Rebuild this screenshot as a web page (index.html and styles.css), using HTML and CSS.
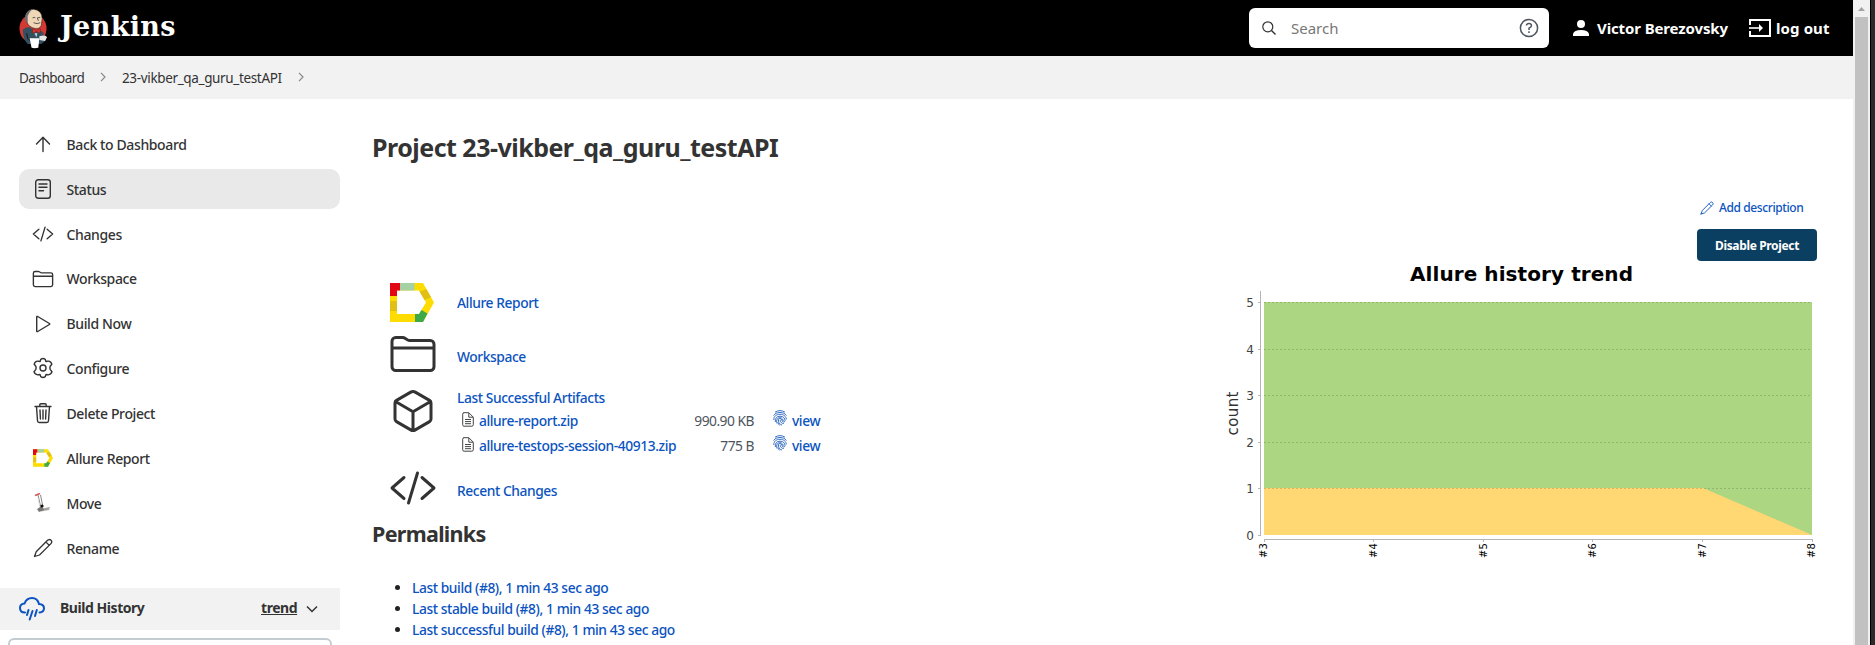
FILE: index.html
```html
<!DOCTYPE html>
<html lang="en">
<head>
<meta charset="utf-8">
<title>Project 23-vikber_qa_guru_testAPI</title>
<link rel="stylesheet" href="styles.css">
</head>
<body>
<svg class="defs" width="0" height="0">
  <symbol id="i-code" viewBox="0 0 512 512"><path d="M160 368 32 256l128-112M352 368l128-112-128-112M304 96l-96 320" class="st"/></symbol>
  <symbol id="i-folder" viewBox="0 0 512 512"><path d="M440 432H72a40 40 0 0 1-40-40V120a40 40 0 0 1 40-40h75.900a40 40 0 0 1 22.200 6.700l27.800 18.600a40 40 0 0 0 22.200 6.700H440a40 40 0 0 1 40 40v240a40 40 0 0 1-40 40zM32 192h448" class="st"/></symbol>
  <symbol id="i-pen" viewBox="0 0 20 20"><path d="M1.500 18.500 3.200 13.700 14.300 2.500C15.500 1.300 17 1.200 18 2.200s.9 2.500-.3 3.700L6.500 17 1.500 18.500zM13 4.100l3.200 3.200" class="st"/></symbol>
  <symbol id="i-allure" viewBox="0 0 44 39"><path fill-rule="evenodd" d="M0 0h33l11 19.500L33 39H0zM7 7.500V31h22l7-11.500-7-12z" fill="#ffdc00"/><path d="M0 0h10v7.500H7V13H0z" fill="#e30613"/><path d="M10 0h14.500v7.500H10z" fill="#a5d2a5"/><path d="M36.500 6.200 41 14.200 34.500 17l-5-8.600z" fill="#e0c014"/><path d="m31.500 27 6 3.500L33 39h-8v-8h4z" fill="#3daa47"/><path d="M0 18h7v10H0z" fill="#e0c014"/></symbol>
  <symbol id="i-file" viewBox="0 0 12 15"><path d="M1.800.7h5l4.500 4.500v7.500q0 1.500-1.500 1.500h-8Q.7 14.200.7 12.700v-10.500Q.7.700 2 .7zM6.800.9v4.300h4.300M3 7.500h6M3 9.600h6M3 11.700h6" fill="none" stroke="#444"/></symbol>
  <symbol id="i-finger" viewBox="0 0 14 16"><g fill="none" stroke="#2b66c0" stroke-width=".95"><path d="M2 2.200Q7-1 12 2.200M.5 5.500Q2.500 2.400 7 2.400t6.500 3.100M.8 10C.8 6 3.500 4.300 7 4.300s6.300 2 6.300 5.200M2.300 12C2 8.500 3.500 6.200 7 6.200s5 2.200 5 4.300q0 1.500-1.400 1.500c-2 0-1.600-3.500-3.600-3.500-1.500 0-1.700 1-1.500 2.500.2 2 1.500 3.500 3.500 4M4 13.500C3 9.500 4.500 7.700 7 7.700s3 2 3.300 3.300M7.200 10.200c.2 2 1.500 3.300 3.600 3.300M6.800 15.500Q5.300 14 4.800 12.500"/></g></symbol>
</svg>
<div class="window">
<div class="page">
  <header class="top">
    <svg class="butler" viewBox="0 0 30 42">
      <ellipse cx="14.500" cy="21" rx="14" ry="15" fill="#d33833"/>
      <path d="M4 22q4-3 8-2l4 5 5-3 4 3 2 9-4 3H9Q4 32 4 22z" fill="#335061"/>
      <path d="M8 26q0 6 4 8" stroke="#111" fill="none"/>
      <path d="M7 9Q8 1 15 1q9 1 9 10l-1 7q-2 4-6 3-7-1-9-7z" fill="#f0d6b7" stroke="#222" stroke-width=".6"/>
      <path d="M6 10Q7 2 14 1q-4 3-5 7v7Q6 14 6 10z" fill="#6d6b6d"/>
      <path d="M14 10q2-1 3 0M19 10l3-.5M15 15q4 2 7 0M19 10l1 3" stroke="#444" fill="none" stroke-width=".9"/>
      <path d="m14 21 4 2 4-2v5l-4-2-4 2z" fill="#d33833" stroke="#81201e" stroke-width=".6"/>
      <path d="m16 26 3 0-1 4z" fill="#cfd8dc"/>
      <path d="M11 31h10l-1 10q-4 1-7 0z" fill="#fff"/><path d="M21 29q7-2 8 1l-2 4-6-1z" fill="#e4e4e4"/>
    </svg>
    <span class="brand">Jenkins</span>
    <div class="search">
      <svg width="14" height="14" viewBox="0 0 14 14"><circle cx="5.800" cy="5.800" r="5" fill="none" stroke="#333" stroke-width="1.200"/><path d="m9.500 9.500 4 4" stroke="#333" stroke-width="1.400"/></svg>
      <span class="ph">Search</span>
      <svg width="20" height="20" viewBox="0 0 20 20" fill="none" stroke="#4d545d" stroke-width="1.500"><circle cx="10" cy="10" r="8.600"/><path d="M7.400 7.500Q7.700 5.500 10 5.500t2.500 2Q12.500 9 10 10.200V12"/><path d="M10 13.200v1.700"/></svg>
    </div>
    <svg class="user" width="16" height="16" viewBox="0 0 16 16" fill="#fff"><circle cx="8" cy="4" r="4"/><path d="M0 16v-2q1-4 8-4t8 4v2z"/></svg>
    <span class="name">Victor Berezovsky</span>
    <svg class="exit" width="22" height="18" viewBox="0 0 22 18" fill="none" stroke="#fff" stroke-width="2"><path d="M1 6V1h20v16H1v-5"/><path d="M0 9h12" stroke-width="1.600"/><path d="m10 5 4 4-4 4z" fill="#fff" stroke="none"/></svg>
    <span class="logout">log out</span>
  </header>
  <nav class="crumbs">
    <span class="c1">Dashboard</span>
    <svg class="chev" viewBox="0 0 6 10"><path d="m1 .8 4 4.200-4 4.200"/></svg>
    <span class="c2">23-vikber_qa_guru_testAPI</span>
    <svg class="chev" viewBox="0 0 6 10"><path d="m1 .8 4 4.200-4 4.200"/></svg>
  </nav>
  <div class="cols">
    <aside class="side">
      <ul class="tasks">
        <li><svg viewBox="0 0 22 22"><path d="M11 18.500v-14M4.500 11 11 4.200l6.500 6.800" class="s"/></svg><span>Back to Dashboard</span></li>
        <li class="on"><svg viewBox="0 0 22 22"><rect x="3.700" y="1.700" width="14.600" height="18.600" rx="2.500" class="s"/><path d="M7 6h8M7 9.300h8M7 12.800h4.500" class="s"/></svg><span>Status</span></li>
        <li><svg><use href="#i-code"/></svg><span>Changes</span></li>
        <li><svg><use href="#i-folder"/></svg><span>Workspace</span></li>
        <li><svg viewBox="0 0 22 22"><path d="M4.700 4v14q0 1 1 .5l11.700-7q.8-.5 0-1L5.700 3.500q-1-.5-1 .5z" class="s"/></svg><span>Build Now</span></li>
        <li><svg viewBox="0 0 22 22"><circle cx="11" cy="11" r="3" class="s"/><path d="M8.800 2.300Q11 .8 13.200 2.300L13.900 4.500 16.200 4.100Q19 4 19.800 7.200L18.200 9.200Q17.600 11 18.300 12.600L20 14.700Q19.300 17.500 16.300 17.900L14 17.500 13.200 19.700Q11 21.200 8.800 19.700L8 17.500 5.700 17.900Q2.700 17.500 2 14.700L3.700 12.600Q4.400 11 3.800 9.200L2.200 7.200Q3 4 5.800 4.100L8.100 4.500z" class="s"/></svg><span>Configure</span></li>
        <li><svg viewBox="0 0 22 22"><path d="M3 4.500h16M4.500 4.500l1 14.300q.1 1.700 1.700 1.700h7.600q1.600 0 1.700-1.700l1-14.300M7.800 4.500V2.700q0-1 1-1h4.400q1 0 1 1v1.800M11 8v9M8 8l.4 9M14 8l-.4 9" class="s"/></svg><span>Delete Project</span></li>
        <li><svg viewBox="0 0 22 22"><use href="#i-allure" x="1" y="2" width="20" height="18"/></svg><span>Allure Report</span></li>
        <li><svg viewBox="0 0 22 22"><path d="M6 3 9 16M8.500 3 11 15" stroke="#888" fill="none"/><path d="M3 3.500 8 1.500" stroke="#d65a5a" stroke-width="1.800"/><path d="m6 6 2 10" stroke="#ddd"/><path d="m10 16.500 8-1.500-1 3-8 1.500z" fill="#aaa69f"/><path d="m5 17 5-3 2 4-5 2z" fill="#777"/><circle cx="10" cy="14" r="1.500" fill="#111"/></svg><span>Move</span></li>
        <li><svg viewBox="0 0 22 22"><use href="#i-pen" x="1" y="1" width="20" height="20"/></svg><span>Rename</span></li>
      </ul>
      <div class="hist">
        <svg width="26" height="24" viewBox="0 0 26 24" fill="none" stroke="#0b53c0" stroke-width="2" stroke-linecap="round"><path d="M6 15.500Q1 15.500 1 11q0-4 4.500-4.500Q7.500 1 13 1t7 6q5 .3 5 4.300t-4.500 4.200"/><path d="M9.500 13 8 18M13.500 14l-2.800 8.500M17.800 13 16 19"/></svg>
        <b class="bh">Build History</b><b class="trend">trend</b>
        <svg width="12" height="8" viewBox="0 0 12 8"><path d="m1 1.500 5 5 5-5" fill="none" stroke="#333" stroke-width="1.500"/></svg>
      </div>
      <div class="filter"></div>
    </aside>
    <main>
      <h1>Project 23-vikber_qa_guru_testAPI</h1>
      <div class="body">
        <section class="left">
          <div class="row r1"><svg class="logo" width="44" height="39"><use href="#i-allure"/></svg><a>Allure Report</a></div>
          <div class="row r2"><svg class="big"><use href="#i-folder"/></svg><a>Workspace</a></div>
          <div class="row r3"><svg class="big" viewBox="0 0 512 512"><path d="M448 341.400V170.600A32 32 0 0 0 432.100 143l-152-88.500a48 48 0 0 0-48.200 0L79.900 143A32 32 0 0 0 64 170.600v170.800A32 32 0 0 0 79.900 369l152 88.500a48 48 0 0 0 48.200 0l152-88.500A32 32 0 0 0 448 341.400zM69 154l187 110 187-110M256 463V264" class="st"/></svg>
            <div class="art"><a class="l3">Last Successful Artifacts</a>
              <div class="f"><svg class="doc"><use href="#i-file"/></svg><a class="file">allure-report.zip</a><span class="size">990.90 KB</span><svg class="fp"><use href="#i-finger"/></svg><a>view</a></div>
              <div class="f"><svg class="doc"><use href="#i-file"/></svg><a class="file">allure-testops-session-40913.zip</a><span class="size">775 B</span><svg class="fp"><use href="#i-finger"/></svg><a>view</a></div>
            </div></div>
          <div class="row r4"><svg class="big"><use href="#i-code"/></svg><a>Recent Changes</a></div>
          <h2>Permalinks</h2>
          <ul class="perma"><li><a>Last build (#8), 1 min 43 sec ago</a></li><li><a>Last stable build (#8), 1 min 43 sec ago</a></li><li><a>Last successful build (#8), 1 min 43 sec ago</a></li></ul>
        </section>
        <section class="right">
          <div class="desc"><svg width="14" height="14" class="blue"><use href="#i-pen"/></svg><a class="add">Add description</a></div>
          <div class="btn">Disable Project</div>
          <svg class="chart" width="600" height="310" viewBox="1220 260 600 310">
            <text x="1410" y="280.500" class="title" textLength="223">Allure history trend</text>
            <path d="M1264 302h548v233h-548z" fill="#add683"/>
            <path d="M1264 488h439l109 47h-548z" fill="#ffd773"/>
            <path d="M1264 302.500h548M1264 349.500h548M1264 395.500h548M1264 442.500h548M1264 488.500h548" class="grid"/>
            <path d="M1260.500 291v244.500M1258 302.500h3M1258 349.500h3M1258 395.500h3M1258 442.500h3M1258 488.500h3M1258 535.500h3M1264 539.500h548.500M1264.500 539v3M1373.500 539v3M1483.500 539v3M1592.500 539v3M1702.500 539v3M1812.500 539v3" class="axis"/>
            <g class="num"><text x="1254" y="307">5</text><text x="1254" y="353.500">4</text><text x="1254" y="400">3</text><text x="1254" y="446.500">2</text><text x="1254" y="493">1</text><text x="1254" y="539.500">0</text></g>
            <text transform="translate(1238 435.500) rotate(-90)" class="cnt" textLength="44">count</text>
            <g class="tick"><text transform="translate(1267 558) rotate(-90)">#3</text><text transform="translate(1377 558) rotate(-90)">#4</text><text transform="translate(1487 558) rotate(-90)">#5</text><text transform="translate(1596 558) rotate(-90)">#6</text><text transform="translate(1706 558) rotate(-90)">#7</text><text transform="translate(1815 558) rotate(-90)">#8</text></g>
          </svg>
        </section>
      </div>
    </main>
  </div>
</div>
<div class="scroll"><svg width="17" height="17" viewBox="0 0 17 17"><path d="M5 11h7L8.500 7z" fill="#a3a3a3"/></svg><div class="thumb"></div></div>
<div class="edge"></div>
</div>
</body>
</html>
```

FILE: styles.css
```css
* { box-sizing: border-box; }
body { margin: 0; font: 500 14px/20px "Noto Sans", "Open Sans", sans-serif; color: #333; background: #fff; }
ul { list-style: none; margin: 0; padding: 0; }
.defs { position: absolute; }
.window { display: flex; height: 645px; overflow: hidden; }
.page { width: 1853px; height: 645px; overflow: hidden; }
.page svg { flex: none; }
span, a, b { white-space: nowrap; }
a { color: #0b53c0; }
.top { display: flex; align-items: center; height: 56px; background: #000; color: #fff; padding-left: 19px; }
.butler { width: 29px; height: 41px; }
.brand { font: bold 27px/32px "DejaVu Serif", serif; letter-spacing: .35px; margin-left: 12px; flex: 0 0 1189px; padding-bottom: 3px; }
.search { display: flex; align-items: center; flex: 0 0 300px; height: 40px; background: #fff; border-radius: 6px; padding: 0 10px 0 13px; }
.ph { color: #777; font-size: 15px; font-weight: 400; margin-left: 15px; flex: 1; }
.user { margin-left: 24px; }
.name, .logout { font-weight: 700; font-size: 15px; letter-spacing: -.12px; }
.name { margin-left: 8px; width: 152px; }
.logout { margin-left: 5px; letter-spacing: .1px; }
.crumbs { display: flex; align-items: center; height: 43px; background: #f2f2f2; padding-left: 19px; font-weight: 400; font-size: 13.5px; letter-spacing: -.35px; }
.c1 { width: 81px; letter-spacing: -.5px; }
.c2 { width: 176px; margin-left: 16px; }
.chev { width: 6px; height: 10px; fill: none; stroke: #888; stroke-width: 1.2; margin-bottom: 2px; }
.cols { display: flex; }
.side { width: 340px; padding-top: 25px; }
.tasks { padding-left: 19px; letter-spacing: -.38px; }
.tasks li { display: flex; align-items: center; height: 40px; margin-bottom: 4.9px; padding-left: 13px; border-radius: 10px; }
.tasks li.on { background: #e9e9e9; }
.tasks svg { width: 22px; height: 22px; }
.tasks span { margin-left: 12.500px; padding-top: 1.500px; }
.s { fill: none; stroke: #333; stroke-width: 1.4; stroke-linecap: round; stroke-linejoin: round; }
.st { fill: none; stroke: #333; stroke-width: 32; stroke-linecap: round; stroke-linejoin: round; }
#i-pen .st { stroke: currentColor; stroke-width: 1.3; }
.blue { color: #0b53c0; }
.hist { display: flex; align-items: center; height: 42px; background: #f2f2f2; margin-top: 19.9px; padding-left: 19px; letter-spacing: -.45px; }
.bh, .trend { padding-bottom: 1px; }
.bh { margin-left: 15px; width: 201px; }
.trend { text-decoration: underline; margin-right: 10px; width: 35px; }
.filter { height: 40px; margin: 8px 8px 0; border: 2px solid #c3cdd1; border-radius: 6px; }
main { width: 1513px; padding-left: 32px; }
h1 { font-size: 25px; line-height: 34px; letter-spacing: -.51px; margin: 31px 0 1px; }
h2 { font-size: 21.5px; line-height: 30px; letter-spacing: -.7px; margin: 0; }
.body { display: flex; }
.left { width: 700px; padding-top: 118px; font-size: 13.8px; letter-spacing: -.42px; }
.row { display: flex; padding-left: 18px; }
.row > a, .art { margin-left: 21px; }
.big { width: 48px; height: 48px; margin: 0 -1px; }
.logo { margin-right: 2px; }
.r1 { height: 47px; }
.r1 a { padding-top: 10px; }
.r2 { height: 57px; }
.r2 a { padding-top: 17px; }
.r3 { height: 77px; }
.r4 { height: 55px; }
.r4 a { padding-top: 17px; }
.art { padding-top: 1px; }
.l3 { display: block; height: 23px; }
.f { display: flex; height: 25px; padding-left: 5px; }
.doc { width: 12px; height: 15px; margin: 1px 5px 0 0; }
.file { flex: 0 0 199px; }
.size { flex: 0 0 76px; text-align: right; color: #4d545d; font-weight: 400; letter-spacing: -.5px; }
.fp { width: 14px; height: 16px; margin: -1px 5px 0 19px; }
.perma { padding-top: 28px; }
.perma li { height: 21px; line-height: 21px; display: flex; align-items: center; padding-left: 23px; }
.perma li::before { content: ""; width: 5px; height: 5px; border-radius: 50%; background: #222; margin-right: 12px; }
.right { width: 781px; padding-top: 33px; }
.desc { display: flex; align-items: center; height: 20px; margin-left: 628px; font-size: 12px; letter-spacing: -.4px; gap: 5px; }
.btn { width: 120px; height: 32px; margin: 11px 0 0 625px; border-radius: 4px; background: #0b3f61; color: #fff; font-size: 12px; font-weight: 700; letter-spacing: -.35px; text-align: center; line-height: 33px; }
.chart { display: block; margin: -1px 0 0 148px; }
.chart text { font-family: "DejaVu Sans", sans-serif; font-weight: 400; }
.chart .title { font-size: 20px; font-weight: 700; }
.grid { stroke: #000; stroke-opacity: .15; stroke-dasharray: 2 2; fill: none; }
.axis { stroke: #b5b5b5; fill: none; }
.num { font-size: 12px; text-anchor: end; fill: #444; }
.cnt { font-size: 15px; fill: #333; }
.tick { font-size: 10px; fill: #000; }
.scroll { width: 17px; background: #f1f1f1; }
.scroll svg { display: block; }
.thumb { width: 13px; height: 628px; margin-left: 2px; background: #c1c1c1; }
.edge { width: 5px; background: #2b2b2b; border-left: 1px solid #000; }
```
